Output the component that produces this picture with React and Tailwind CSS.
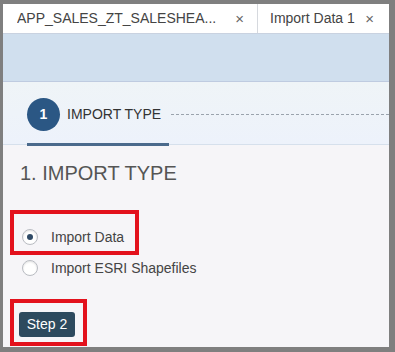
import { useState } from 'react'

function Radio({ checked }) {
  return (
    <span className="flex h-[16px] w-[16px] items-center justify-center rounded-full border border-[#b9bcc2] bg-white shadow-[inset_0_1px_2px_rgba(0,0,0,0.12)]">
      {checked && <span className="h-[6px] w-[6px] rounded-full bg-[#2f4a66]" />}
    </span>
  )
}

function Tab({ label, className }) {
  return (
    <div className={`flex h-full items-center bg-white text-[14px] text-[#444] ${className}`}>
      <span className="truncate">{label}</span>
      <span className="ml-auto text-[15px] leading-none text-[#666]">×</span>
    </div>
  )
}

export default function App() {
  const [type, setType] = useState('data')

  return (
    <div className="h-[352px] w-[395px] bg-[#7f7f7f] pb-[5px] pl-[3px] pr-[6px] pt-[4px] font-['Liberation_Sans',Arial,sans-serif]">
      <div className="flex h-full flex-col overflow-hidden bg-[#f6f5f8]">
        {/* tabs */}
        <div className="flex h-[30px] border-b border-[#c9d2e0] bg-white">
          <Tab label="APP_SALES_ZT_SALESHEA..." className="w-[255px] border-r border-[#d6d9de] pl-[14px] pr-[13px]" />
          <Tab label="Import Data 1" className="flex-1 pl-[12px] pr-[15px]" />
        </div>

        {/* toolbar */}
        <div className="h-[48px] border-b border-[#bfcbe0] bg-[#d0dfee]" />

        {/* steps */}
        <div className="relative h-[63px] border-b border-[#d6e0ec] bg-gradient-to-b from-[#eff4f7] to-[#edf2fb]">
          <div className="flex items-center pl-[24px] pt-[16px]">
            <span className="flex h-[33px] w-[33px] items-center justify-center rounded-full bg-[#2b5784] text-[14px] font-bold text-white">1</span>
            <span className="ml-[7px] text-[14px] text-[#333]">IMPORT TYPE</span>
            <span className="ml-[10px] flex-1 border-t border-dashed border-[#9aa3ad]" />
          </div>
          <div className="absolute bottom-[-2px] left-[24px] h-[3px] w-[142px] bg-[#4b6a8c]" />
        </div>

        {/* content */}
        <div className="pl-[7px]">
          <h1 className="ml-[10px] mt-[16px] text-[20px] leading-[24px] text-[#555]">1. IMPORT TYPE</h1>

          <div className="mt-[25px] h-[45px] w-[129px] border-[4px] border-[#e3121d] pl-[8px] pt-[14px]">
            <label className="flex h-[18px] items-center gap-[13px] text-[14px] text-[#444]" onClick={() => setType('data')}>
              <Radio checked={type === 'data'} />
              Import Data
            </label>
          </div>

          <label className="ml-[12px] mt-[4px] flex h-[18px] items-center gap-[13px] text-[14px] text-[#444]" onClick={() => setType('esri')}>
            <Radio checked={type === 'esri'} />
            Import ESRI Shapefiles
          </label>

          <div className="mt-[22px] h-[47px] w-[77px] border-[4px] border-[#e3121d] pl-[5px] pt-[9px]">
            <button className="h-[25px] w-[56px] rounded-[3px] bg-[#2d4a5e] text-[14px] text-white">Step 2</button>
          </div>
        </div>
      </div>
    </div>
  )
}
